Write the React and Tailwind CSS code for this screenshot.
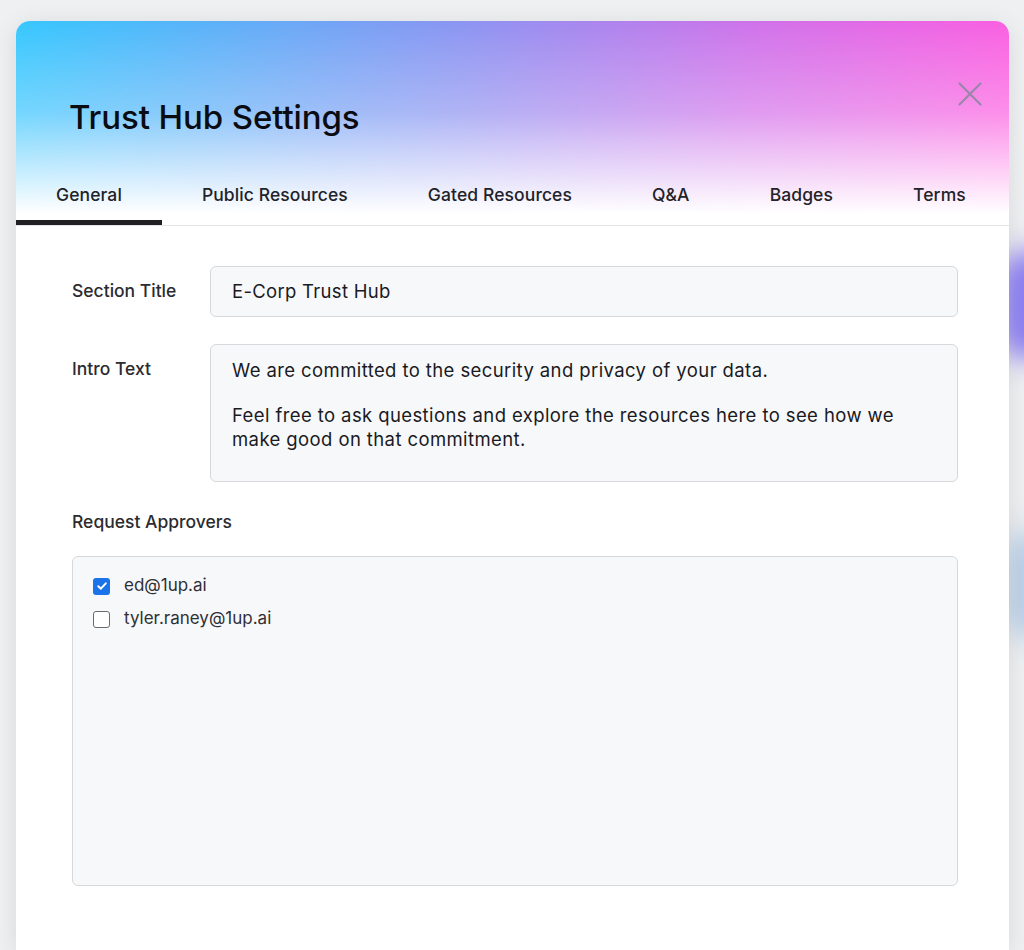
import React from "react";

const tabs = ["General", "Public Resources", "Gated Resources", "Q&A", "Badges", "Terms"];

function Check({ checked }) {
  if (checked) {
    return (
      <span className="flex h-[17px] w-[17px] items-center justify-center rounded-[3px] bg-[#1a73e8]">
        <svg width="12" height="12" viewBox="0 0 12 12" fill="none">
          <path d="M2.3 6.2 L4.9 8.7 L9.8 3.3" stroke="white" strokeWidth="2" strokeLinecap="round" strokeLinejoin="round" />
        </svg>
      </span>
    );
  }
  return <span className="block h-[17px] w-[17px] rounded-[3px] border-[1.5px] border-[#6b6b6b] bg-white" />;
}

export default function App() {
  return (
    <div className="relative min-h-[950px] w-full overflow-hidden bg-[#eef0f2] font-['Inter',sans-serif]">
      <div className="absolute left-[1000px] top-[250px] h-[110px] w-[60px] rounded-full bg-[#8a7cf2] blur-[14px]" />
      <div className="absolute left-[1005px] top-[530px] h-[110px] w-[60px] rounded-full bg-[#b7cde6] blur-[14px]" />
      <div className="relative ml-4 mr-[15px] mt-[21px] min-h-[929px] overflow-hidden rounded-t-[14px] bg-white shadow-[0_4px_24px_rgba(0,0,0,0.10)]">
        <div className="relative bg-[linear-gradient(to_bottom,rgba(255,255,255,0)_0%,rgba(255,255,255,0.3)_45%,#ffffff_94%),linear-gradient(100deg,#36c7fe_0%,#8f93f1_45%,#d072ea_72%,#ff5de0_100%)]">
          <button className="absolute right-[27px] top-[61px] p-0">
            <svg width="24" height="24" viewBox="0 0 24 24" fill="none">
              <path d="M1.5 1.5 L22.5 22.5 M22.5 1.5 L1.5 22.5" stroke="#9a86a8" strokeWidth="2.2" strokeLinecap="round" />
            </svg>
          </button>
          <h1 className="pl-[53px] pt-[76px] text-[33px] font-medium leading-[40px] tracking-[-0.1px] text-[#0b0b12]">
            Trust Hub Settings
          </h1>
          <div className="mt-[32px] flex border-b border-[#e3e4e6]">
            {tabs.map((t, i) => (
              <div
                key={t}
                className={
                  i === 0
                    ? "flex h-[56px] items-center border-b-[5px] border-[#1f1f24] px-10 pt-[1px] text-[17.5px] font-medium tracking-[0.1px] text-[#222228]"
                    : "flex h-[56px] items-center border-b-[5px] border-transparent px-10 pt-[1px] text-[17.5px] font-medium tracking-[0.1px] text-[#222228]"
                }
              >
                {t}
              </div>
            ))}
          </div>
        </div>

        <div className="flex flex-col pl-14 pr-[51px] pt-10">
          <div className="flex items-center">
            <div className="w-[138px] text-[17.5px] font-medium text-[#2b2b30]">Section Title</div>
            <div className="flex h-[51px] flex-1 items-center rounded-[6px] border border-[#d6d8db] bg-[#f7f8fa] px-[21px] text-[18.5px] tracking-[0.3px] text-[#1a1a1f]">
              E-Corp Trust Hub
            </div>
          </div>

          <div className="mt-[27px] flex items-start">
            <div className="w-[138px] pt-[13px] text-[17.5px] font-medium leading-6 text-[#2b2b30]">Intro Text</div>
            <div className="h-[138px] flex-1 rounded-[6px] border border-[#d6d8db] bg-[#f7f8fa] px-[21px] pt-[13px] text-[18.5px] leading-6 tracking-[0.4px] text-[#1a1a1f]">
              <p>We are committed to the security and privacy of your data.</p>
              <p className="mt-[21px]">
                Feel free to ask questions and explore the resources here to see how we make good on that commitment.
              </p>
            </div>
          </div>

          <div className="mt-[28px] text-[17.5px] font-medium leading-6 text-[#2b2b30]">Request Approvers</div>

          <div className="mt-[22px] h-[330px] rounded-[6px] border border-[#d6d8db] bg-[#f7f8fa] px-5 pt-[17px]">
            <label className="flex h-[24px] items-center gap-[14px] text-[17px] text-[#2f2f35]">
              <Check checked />
              <span>ed@1up.ai</span>
            </label>
            <label className="mt-[9px] flex h-[24px] items-center gap-[14px] text-[17px] text-[#2f2f35]">
              <Check checked={false} />
              <span>tyler.raney@1up.ai</span>
            </label>
          </div>
        </div>
      </div>
    </div>
  );
}
